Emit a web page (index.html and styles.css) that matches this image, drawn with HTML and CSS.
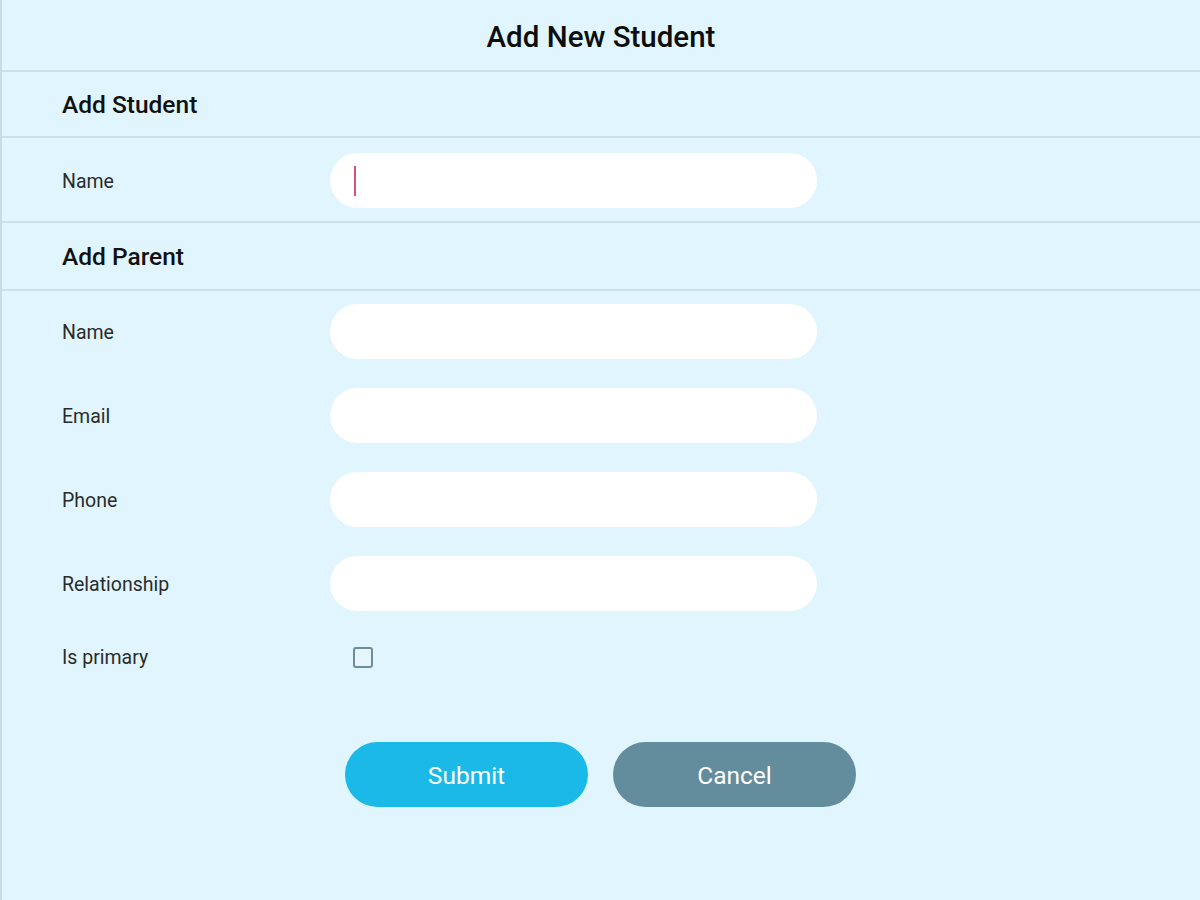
FILE: index.html
```html
<!DOCTYPE html>
<html lang="en">
<head>
<meta charset="utf-8">
<title>Add New Student</title>
<link rel="stylesheet" href="styles.css">
</head>
<body>
<div class="page">
  <header class="title-bar">
    <h1 class="title">Add New Student</h1>
  </header>

  <h2 class="section-head">Add Student</h2>
  <div class="field-row student-row">
    <span class="label">Name</span>
    <div class="text-input"><span class="caret"></span></div>
  </div>

  <h2 class="section-head parent-head">Add Parent</h2>
  <div class="parent-fields">
    <div class="field-row">
      <span class="label">Name</span>
      <div class="text-input"></div>
    </div>
    <div class="field-row">
      <span class="label">Email</span>
      <div class="text-input"></div>
    </div>
    <div class="field-row">
      <span class="label">Phone</span>
      <div class="text-input"></div>
    </div>
    <div class="field-row">
      <span class="label">Relationship</span>
      <div class="text-input"></div>
    </div>
    <div class="field-row check-row">
      <span class="label">Is primary</span>
      <div class="check-cell"><span class="checkbox"></span></div>
    </div>
  </div>

  <div class="actions">
    <button class="btn btn-submit" type="button">Submit</button>
    <button class="btn btn-cancel" type="button">Cancel</button>
  </div>
</div>
</body>
</html>
```

FILE: styles.css
```css
* {
  box-sizing: border-box;
}

html, body {
  margin: 0;
  padding: 0;
  height: 100%;
}

body {
  background: #e0f5fd;
  font-family: Roboto, "Noto Sans", "Liberation Sans", sans-serif;
  color: #222;
}

.page {
  min-height: 900px;
  border-left: 2px solid #c4dde6;
  background: #e0f5fd;
}

.title-bar {
  height: 72px;
  border-bottom: 2px solid #c9e1e7;
  display: flex;
  align-items: center;
  justify-content: center;
}

.title {
  margin: 0;
  font-size: 29.5px;
  font-weight: 500;
  color: #0d0d0d;
  line-height: 1;
  padding-top: 5px;
}

.section-head {
  margin: 0;
  height: 66px;
  padding-left: 60px;
  padding-top: 2px;
  border-bottom: 2px solid #c9e1e7;
  display: flex;
  align-items: center;
  font-size: 24.5px;
  font-weight: 500;
  color: #111;
  line-height: 1;
}

.parent-head {
  height: 68px;
}

.field-row {
  display: grid;
  grid-template-columns: 268px 487px;
  align-items: center;
  padding: 13px 0 16px 60px;
}

.student-row {
  padding: 15px 0 13px 60px;
  border-bottom: 2px solid #c9e1e7;
}

.label {
  font-size: 19.5px;
  color: #2b2b2b;
  line-height: 1;
  padding-top: 2px;
}

.text-input {
  height: 55px;
  background: #ffffff;
  border-radius: 28px;
  display: flex;
  align-items: center;
  padding-left: 24px;
}

.caret {
  display: block;
  width: 2px;
  height: 30px;
  background: #d9507a;
}

.check-row {
  height: 60px;
  padding-top: 0;
  padding-bottom: 0;
}

.check-cell {
  display: flex;
  align-items: center;
  padding-left: 23px;
}

.checkbox {
  display: block;
  width: 20px;
  height: 21px;
  border: 2px solid #6b8e99;
  border-radius: 3px;
  background: #e6f6fb;
}

.actions {
  display: flex;
  gap: 25px;
  padding: 55px 0 0 343px;
}

.btn {
  width: 243px;
  height: 65px;
  border: none;
  border-radius: 33px;
  font-family: Roboto, "Noto Sans", "Liberation Sans", sans-serif;
  font-size: 24.5px;
  color: #ffffff;
  cursor: pointer;
  padding-top: 2px;
}

.btn-submit {
  background: #1bb9e8;
}

.btn-cancel {
  background: #638d9c;
}
```
